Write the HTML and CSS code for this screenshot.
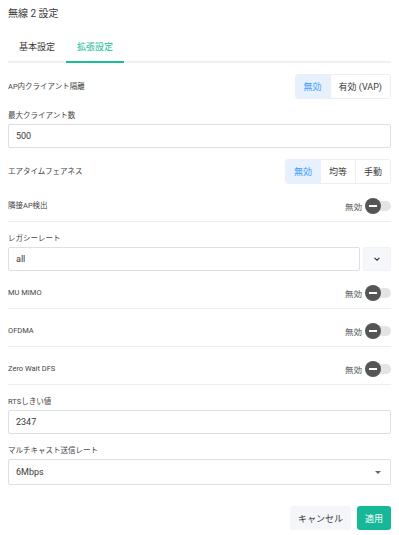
FILE: index.html
```html
<!DOCTYPE html>
<html lang="ja">
<head>
<meta charset="utf-8">
<link rel="stylesheet" href="styles.css">
</head>
<body>
<div class="title">無線 2 設定</div>
<div class="tabs">
  <div class="tab">基本設定</div>
  <div class="tab active">拡張設定</div>
</div>
<div class="form">
  <div class="item row">
    <div class="label">AP内クライアント隔離</div>
    <div class="seg">
      <div class="seg-btn on">無効</div>
      <div class="seg-btn">有効 (VAP)</div>
    </div>
  </div>
  <div class="item">
    <div class="label top">最大クライアント数</div>
    <div class="input">500</div>
  </div>
  <div class="item row">
    <div class="label">エアタイムフェアネス</div>
    <div class="seg">
      <div class="seg-btn on">無効</div>
      <div class="seg-btn">均等</div>
      <div class="seg-btn">手動</div>
    </div>
  </div>
  <div class="item row toggle-row">
    <div class="label">隣接AP検出</div>
    <div class="switch"><span class="state">無効</span><span class="track"><span class="knob"></span></span></div>
  </div>
  <div class="item">
    <div class="label top">レガシーレート</div>
    <div class="combo">
      <div class="input grow">all</div>
      <div class="chev"><svg width="8" height="6" viewBox="0 0 8 6"><path d="M1.5 1.8 L4 4.2 L6.5 1.8" fill="none" stroke="#333" stroke-width="1.1"/></svg></div>
    </div>
  </div>
  <div class="item row toggle-row">
    <div class="label">MU MIMO</div>
    <div class="switch"><span class="state">無効</span><span class="track"><span class="knob"></span></span></div>
  </div>
  <div class="item row toggle-row">
    <div class="label">OFDMA</div>
    <div class="switch"><span class="state">無効</span><span class="track"><span class="knob"></span></span></div>
  </div>
  <div class="item row toggle-row">
    <div class="label">Zero Wait DFS</div>
    <div class="switch"><span class="state">無効</span><span class="track"><span class="knob"></span></span></div>
  </div>
  <div class="item">
    <div class="label top">RTSしきい値</div>
    <div class="input">2347</div>
  </div>
  <div class="item">
    <div class="label top">マルチキャスト送信レート</div>
    <div class="input select">6Mbps<span class="caret"></span></div>
  </div>
</div>
<div class="actions">
  <div class="btn cancel">キャンセル</div>
  <div class="btn apply">適用</div>
</div>
</body>
</html>
```
FILE: styles.css
```css
body {
  margin: 8px;
  font-family: Roboto, "Noto Sans CJK JP", sans-serif;
  color: #333;
  background: #fff;
}
.title {
  font-size: 10px;
  line-height: 12px;
  color: #3a3a3a;
}
.tabs {
  display: flex;
  margin-top: 13px;
  border-bottom: 2px solid #f0f0f0;
}
.tab {
  font-size: 9px;
  line-height: 28px;
  padding: 0 11px;
  color: #3a3a3a;
  margin-bottom: -2px;
  border-bottom: 2px solid transparent;
}
.tab.active {
  color: #1abc9c;
  border-bottom-color: #1abc9c;
}
.form {
  display: flex;
  flex-direction: column;
}
.item {
  margin-top: 11px;
}
.row {
  display: flex;
  align-items: center;
  justify-content: space-between;
}
.label {
  font-size: 7.5px;
  line-height: 12px;
  color: #444;
}
.label.top {
  margin-bottom: 2px;
}
.seg {
  display: flex;
  height: 25px;
  border: 1px solid #ebeef5;
  border-radius: 3px;
  box-sizing: border-box;
  overflow: hidden;
}
.seg-btn {
  font-size: 9px;
  padding: 0 8px;
  display: flex;
  align-items: center;
  color: #3a3a3a;
  background: #fff;
}
.seg-btn + .seg-btn {
  border-left: 1px solid #ebeef5;
}
.seg-btn.on {
  background: #e6f1fd;
  color: #409eff;
}
.input {
  height: 24px;
  box-sizing: border-box;
  border: 1px solid #dcdfe6;
  border-radius: 2px;
  font-size: 9px;
  display: flex;
  align-items: center;
  padding: 0 7px;
  color: #3a3a3a;
}
.select {
  height: 26px;
  justify-content: space-between;
  padding-right: 9px;
}
.caret {
  width: 0;
  height: 0;
  border-left: 3px solid transparent;
  border-right: 3px solid transparent;
  border-top: 3px solid #666;
}
.combo {
  display: flex;
  gap: 3px;
}
.grow {
  flex: 1;
}
.chev {
  width: 28px;
  height: 24px;
  box-sizing: border-box;
  background: #f5f7fa;
  border: 1px solid #f0f2f5;
  border-radius: 2px;
  display: flex;
  align-items: center;
  justify-content: center;
}
.toggle-row {
  height: 22px;
  padding-bottom: 4px;
  border-bottom: 1px solid #ebeef5;
  box-sizing: content-box;
}
.switch {
  display: flex;
  align-items: center;
  gap: 4px;
}
.state {
  font-size: 8.5px;
  color: #555;
}
.track {
  position: relative;
  width: 25px;
  height: 10px;
  border-radius: 5px;
  background: #e4e4e4;
  display: block;
}
.knob {
  position: absolute;
  left: -1px;
  top: -3px;
  width: 16px;
  height: 16px;
  border-radius: 50%;
  background: #555;
}
.knob::after {
  content: "";
  position: absolute;
  left: 4px;
  top: 7px;
  width: 8px;
  height: 2px;
  background: #fff;
}
.actions {
  display: flex;
  justify-content: flex-end;
  gap: 6px;
  margin-top: 21px;
}
.btn {
  height: 24px;
  display: flex;
  align-items: center;
  font-size: 9px;
  border-radius: 3px;
  padding: 0 7px;
}
.cancel {
  background: #f4f6f9;
  color: #3a3a3a;
  padding: 0 8px;
}
.apply {
  background: #17b897;
  color: #fff;
  padding: 0 8px;
}
```
